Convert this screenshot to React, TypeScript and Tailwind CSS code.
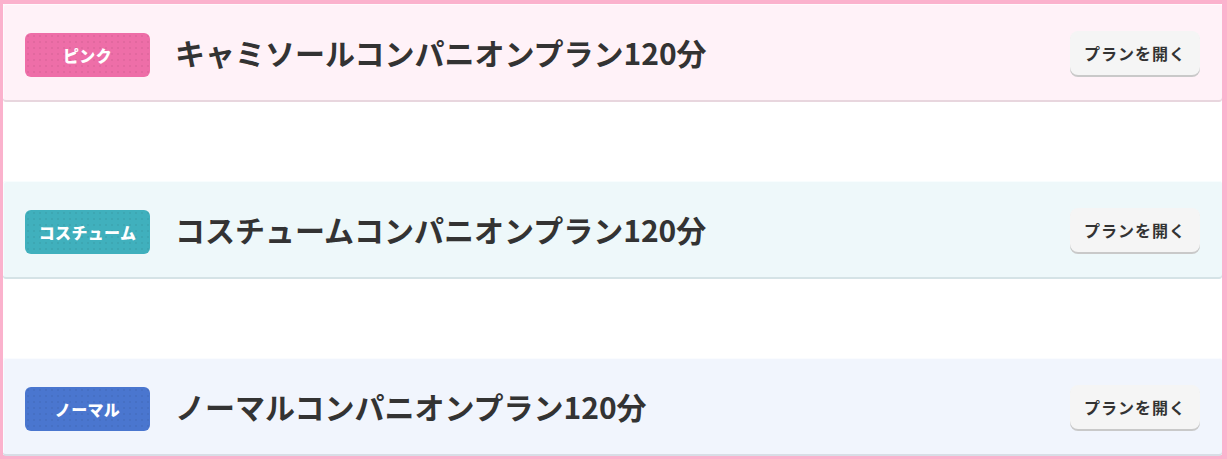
import React from "react";

const font = { fontFamily: '"Noto Sans CJK JP", "Noto Sans", sans-serif' };

type Plan = {
  badge: string;
  title: string;
  cardBg: string;
  badgeBg: string;
  shadow: string;
};

const plans: Plan[] = [
  {
    badge: "ピンク",
    title: "キャミソールコンパニオンプラン120分",
    cardBg: "bg-[#fff2f8]",
    badgeBg: "bg-[#ee6ea8]",
    shadow: "shadow-[0_2px_0_#e8d6de,inset_1px_1px_0_#fffafd]",
  },
  {
    badge: "コスチューム",
    title: "コスチュームコンパニオンプラン120分",
    cardBg: "bg-[#eef8fa]",
    badgeBg: "bg-[#40b0bd]",
    shadow: "shadow-[0_2px_0_#d5e3e6,inset_1px_1px_0_#f8fdfe]",
  },
  {
    badge: "ノーマル",
    title: "ノーマルコンパニオンプラン120分",
    cardBg: "bg-[#f1f5fd]",
    badgeBg: "bg-[#4a76cf]",
    shadow: "shadow-[0_2px_0_#d8dde6,inset_1px_1px_0_#fafcff]",
  },
];

function Card({ p }: { p: Plan }) {
  return (
    <div
      className={`flex h-[96px] items-center rounded-[3px] pl-[22px] pr-[22px] ${p.cardBg} ${p.shadow}`}
    >
      <div
        className={`mt-[5px] flex h-[44px] w-[125px] shrink-0 items-center justify-center rounded-[6px] text-[16px] font-black tracking-[0.02em] text-white ${p.badgeBg} bg-[radial-gradient(rgba(0,0,0,0.05)_1px,transparent_1.2px)] bg-[length:6px_6px]`}
      >
        {p.badge}
      </div>
      <div className="ml-[25px] flex-1 text-[30px] font-bold leading-none text-[#333333]">
        {p.title}
      </div>
      <button className="mt-[1px] h-[44px] w-[130px] shrink-0 rounded-[8px] bg-[#f5f5f5] text-[16px] font-bold tracking-[0.06em] text-[#333333] shadow-[0_2px_0_#c9c9c9]">
        プランを開く
      </button>
    </div>
  );
}

export default function App() {
  return (
    <div
      style={font}
      className="box-border h-[459px] w-[1227px] border-b-4 border-l-[3px] border-r-[5px] border-t-4 border-[#fbb2cd] bg-white"
    >
      <div className="flex flex-col gap-[81px]">
        {plans.map((p) => (
          <Card key={p.badge} p={p} />
        ))}
      </div>
    </div>
  );
}
